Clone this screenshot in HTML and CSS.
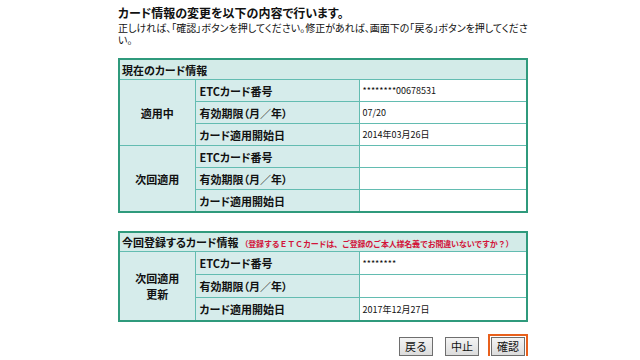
FILE: index.html
```html
<!DOCTYPE html>
<html lang="ja">

<head>
	<meta charset="UTF-8" />
	<title>カード情報の変更</title>
	<link rel="stylesheet" href="styles.css">
</head>

<body>
	<div class="container">
		<h1 class="lead">カード情報の変更を以下の内容で行います。</h1>
		<p class="note">正しければ、「確認」ボタンを押してください。修正があれば、画面下の「戻る」ボタンを押してください。</p>

		<table class="card-table">
			<colgroup>
				<col class="col-label" />
				<col class="col-field" />
				<col class="col-value" />
			</colgroup>
			<tr>
				<th class="caption" colspan="3">現在のカード情報</th>
			</tr>
			<tr>
				<th class="label" rowspan="3">適用中</th>
				<th class="field">ETCカード番号</th>
				<td class="value">********00678531</td>
			</tr>
			<tr>
				<th class="field">有効期限（月／年）</th>
				<td class="value">07/20</td>
			</tr>
			<tr>
				<th class="field">カード適用開始日</th>
				<td class="value">2014年03月26日</td>
			</tr>
			<tr>
				<th class="label" rowspan="3">次回適用</th>
				<th class="field">ETCカード番号</th>
				<td class="value"></td>
			</tr>
			<tr>
				<th class="field">有効期限（月／年）</th>
				<td class="value"></td>
			</tr>
			<tr>
				<th class="field">カード適用開始日</th>
				<td class="value"></td>
			</tr>
		</table>

		<table class="card-table new-card">
			<colgroup>
				<col class="col-label" />
				<col class="col-field" />
				<col class="col-value" />
			</colgroup>
			<tr>
				<th class="caption" colspan="3">今回登録するカード情報<span class="warn">（登録するＥＴＣカードは、ご登録のご本人様名義でお間違いないですか？）</span></th>
			</tr>
			<tr>
				<th class="label" rowspan="3">次回適用<br />更新</th>
				<th class="field">ETCカード番号</th>
				<td class="value">********</td>
			</tr>
			<tr>
				<th class="field">有効期限（月／年）</th>
				<td class="value"></td>
			</tr>
			<tr>
				<th class="field">カード適用開始日</th>
				<td class="value">2017年12月27日</td>
			</tr>
		</table>

		<div class="buttons">
			<button class="btn">戻る</button>
			<button class="btn">中止</button>
			<button class="btn btn-primary">確認</button>
		</div>
	</div>
</body>

</html>
```

FILE: styles.css
```css
body {
	margin: 0;
	background: #fff;
	font-family: "Noto Sans CJK JP", "Noto Sans", sans-serif;
	color: #111;
}

.container {
	width: 410px;
	margin: 0 0 0 118px;
	padding-top: 5px;
}

.lead {
	margin: 0 0 2px;
	font-size: 12px;
	line-height: 15px;
	font-weight: bold;
	font-feature-settings: "palt";
}

.note {
	margin: 0 0 12px;
	font-size: 10px;
	line-height: 12px;
	font-feature-settings: "palt";
}

.card-table {
	width: 410px;
	border-collapse: collapse;
	table-layout: fixed;
	border: 2px solid #2f9a7c;
	margin-bottom: 18px;
}

.col-label {
	width: 76px;
}

.col-field {
	width: 164px;
}

.card-table th,
.card-table td {
	border: 1px solid #63bcb1;
	height: 21px;
	padding: 0 4px;
	text-align: left;
	font-size: 11px;
	font-feature-settings: "palt";
}

.card-table .caption {
	background: #d3ebe8;
	height: 19px;
	padding-left: 2px;
	font-weight: bold;
}

.card-table .label {
	background: #d6eceb;
	text-align: center;
	font-weight: bold;
	line-height: 16px;
}

.card-table .field {
	background: #d6eceb;
	font-weight: bold;
}

.card-table .value {
	background: #fff;
	font-size: 9px;
	padding-left: 3px;
}

.new-card th,
.new-card td {
	height: 22px;
}

.new-card .caption {
	height: 18px;
}

.warn {
	color: #d2143a;
	font-size: 8px;
	margin-left: 2px;
	letter-spacing: -0.2px;
	font-feature-settings: normal;
}

.buttons {
	display: flex;
	justify-content: flex-end;
	gap: 12px;
	padding-right: 3px;
	margin-top: -3px;
}

.btn {
	font-family: "Noto Sans CJK JP", sans-serif;
	font-size: 11px;
	line-height: 13px;
	padding: 2px 5px;
	background: linear-gradient(#f4f4f4, #dcdcdc);
	border: 1px solid #6e6e6e;
	border-radius: 0;
	color: #111;
}

.btn-primary {
	outline: 2px solid #e8601c;
	outline-offset: 1px;
}
```
